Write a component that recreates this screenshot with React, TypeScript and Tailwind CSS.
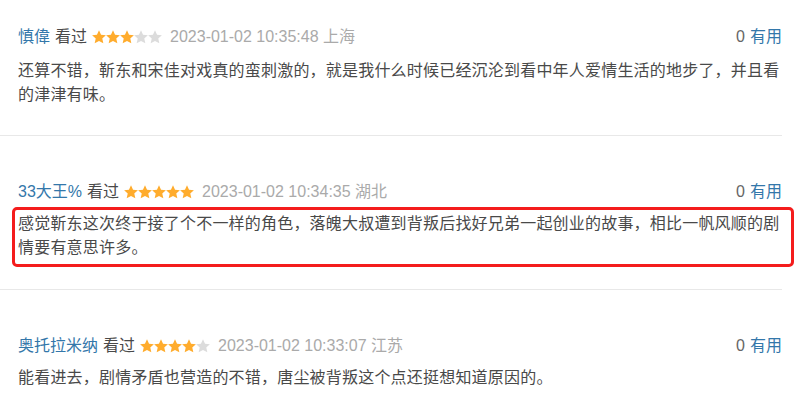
import React from "react";

type Item = {
  name: string;
  stars: number;
  time: string;
  loc: string;
  text: string;
  highlight?: boolean;
};

const items: Item[] = [
  {
    name: "慎偉",
    stars: 3,
    time: "2023-01-02 10:35:48",
    loc: "上海",
    text: "还算不错，靳东和宋佳对戏真的蛮刺激的，就是我什么时候已经沉沦到看中年人爱情生活的地步了，并且看的津津有味。",
  },
  {
    name: "33大王%",
    stars: 5,
    time: "2023-01-02 10:34:35",
    loc: "湖北",
    text: "感觉靳东这次终于接了个不一样的角色，落魄大叔遭到背叛后找好兄弟一起创业的故事，相比一帆风顺的剧情要有意思许多。",
    highlight: true,
  },
  {
    name: "奥托拉米纳",
    stars: 4,
    time: "2023-01-02 10:33:07",
    loc: "江苏",
    text: "能看进去，剧情矛盾也营造的不错，唐尘被背叛这个点还挺想知道原因的。",
  },
];

function Star({ on }: { on: boolean }) {
  return (
    <svg width="14" height="14" viewBox="0 0 24 24" className="block">
      <path
        d="M12 0.6l3.5 7.6 8.3.9-6.2 5.6 1.8 8.2L12 18.7l-7.4 4.2 1.8-8.2L0.2 9.1l8.3-.9z"
        fill={on ? "#ffac2d" : "#dcdcdc"}
      />
    </svg>
  );
}

export default function App() {
  return (
    <div
      className="w-[795px] h-[405px] overflow-hidden bg-white text-[16px]"
      style={{ fontFamily: '"Liberation Sans", "Noto Sans CJK SC", sans-serif' }}
    >
      {items.map((it, i) => (
        <div
          key={i}
          className={`mr-[13px] pl-[18px] border-b border-[#e8e8e8] ${
            i === 0 ? "pt-[25px] pb-[28px]" : "pt-[44px] pb-[29px]"
          }`}
        >
          <div className="flex items-center h-[24px] leading-[24px]">
            <div className="flex items-center flex-1 min-w-0">
              <span className="text-[#3377aa]">{it.name}</span>
              <span className="ml-[5px] text-[#494949]">看过</span>
              <span className="ml-[5px] flex">
                {[0, 1, 2, 3, 4].map((s) => (
                  <Star key={s} on={s < it.stars} />
                ))}
              </span>
              <span className="ml-[8px] text-[#aaaaaa]">
                {it.time} {it.loc}
              </span>
            </div>
            <div>
              <span className="text-[#666666]">0</span>
              <span className="ml-[5px] text-[#3377aa]">有用</span>
            </div>
          </div>
          <div className={`relative ${i === 0 ? "mt-[10px]" : "mt-[8px]"}`}>
            <p className="leading-[24px] text-[#494949] tracking-[0.2px]">{it.text}</p>
            {it.highlight && (
              <div className="absolute -left-[6px] -top-[5px] -right-[12px] -bottom-[7px] border-[3px] border-[#f41c1c] rounded-[5px] pointer-events-none" />
            )}
          </div>
        </div>
      ))}
    </div>
  );
}
